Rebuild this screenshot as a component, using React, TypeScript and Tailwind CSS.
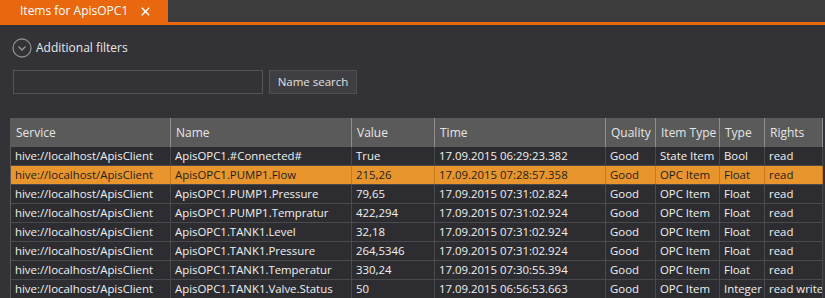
import React from 'react'

const rows = [
  ['hive://localhost/ApisClient', 'ApisOPC1.#Connected#', 'True', '17.09.2015 06:29:23.382', 'Good', 'State Item', 'Bool', 'read'],
  ['hive://localhost/ApisClient', 'ApisOPC1.PUMP1.Flow', '215,26', '17.09.2015 07:28:57.358', 'Good', 'OPC Item', 'Float', 'read'],
  ['hive://localhost/ApisClient', 'ApisOPC1.PUMP1.Pressure', '79,65', '17.09.2015 07:31:02.824', 'Good', 'OPC Item', 'Float', 'read'],
  ['hive://localhost/ApisClient', 'ApisOPC1.PUMP1.Tempratur', '422,294', '17.09.2015 07:31:02.924', 'Good', 'OPC Item', 'Float', 'read'],
  ['hive://localhost/ApisClient', 'ApisOPC1.TANK1.Level', '32,18', '17.09.2015 07:31:02.924', 'Good', 'OPC Item', 'Float', 'read'],
  ['hive://localhost/ApisClient', 'ApisOPC1.TANK1.Pressure', '264,5346', '17.09.2015 07:31:02.924', 'Good', 'OPC Item', 'Float', 'read'],
  ['hive://localhost/ApisClient', 'ApisOPC1.TANK1.Temperatur', '330,24', '17.09.2015 07:30:55.394', 'Good', 'OPC Item', 'Float', 'read'],
  ['hive://localhost/ApisClient', 'ApisOPC1.TANK1.Valve.Status', '50', '17.09.2015 06:56:53.663', 'Good', 'OPC Item', 'Integer', 'read write'],
]

const headers = ['Service', 'Name', 'Value', 'Time', 'Quality', 'Item Type', 'Type', 'Rights']

const cols = 'grid grid-cols-[160px_181px_83px_171px_50px_64px_45px_58px]'

export default function App() {
  return (
    <div className="w-[825px] h-[298px] overflow-hidden bg-[#333337] text-[#f0f0f0] font-['Open_Sans',sans-serif]">
      {/* tab strip */}
      <div className="flex h-[22px] bg-[#3c3c3c]">
        <div className="flex w-[168px] items-center bg-[#e8670f] pl-[20px] pr-[18px] text-[12px] text-white">
          <span>Items for ApisOPC1</span>
          <svg className="ml-auto" width="9" height="9" viewBox="0 0 9 9">
            <path d="M0.8 0.8L8.2 8.2M8.2 0.8L0.8 8.2" stroke="#fff" strokeWidth="1.5" />
          </svg>
        </div>
      </div>
      <div className="h-[3px] bg-[#e8670f]" />

      {/* filters */}
      <div className="mt-[13px] flex items-center gap-[4px] pl-[12px]">
        <svg width="20" height="20" viewBox="0 0 20 20">
          <circle cx="10" cy="10" r="9" fill="none" stroke="#8c8c8c" strokeWidth="1.3" />
          <path d="M6.5 8.5L10 12L13.5 8.5" fill="none" stroke="#9a9a9a" strokeWidth="1.3" />
        </svg>
        <span className="text-[12px] text-[#e8e8e8]">Additional filters</span>
      </div>

      <div className="mt-[12px] flex gap-[6px] pl-[13px]">
        <div className="h-[24px] w-[250px] border border-[#555558] bg-[#333337]" />
        <button className="h-[24px] w-[88px] border border-[#505054] bg-[#3f3f43] text-[11.5px] text-[#e0e0e0]">
          Name search
        </button>
      </div>

      {/* grid */}
      <div className="ml-[10px] mt-[24px] w-[813px] border-l border-[#5a5a5a] text-[11.4px]">
        <div className={`${cols} h-[29px] bg-[#5a5a5a] text-[12px] text-[#e6e6e6]`}>
          {headers.map((h) => (
            <div key={h} className="flex items-center border-r border-[#8e8e8e] pl-[5px] whitespace-nowrap overflow-hidden">
              {h}
            </div>
          ))}
        </div>
        {rows.map((r, i) => (
          <div
            key={i}
            className={`${cols} h-[19px] border-b border-[#4a4a4e] ${i === 1 ? 'bg-[#e8952e] text-[#1e1e1e]' : 'bg-[#2d2d31]'}`}
          >
            {r.map((c, j) => (
              <div
                key={j}
                className={`flex items-center border-r pl-[4px] leading-none whitespace-nowrap overflow-hidden ${i === 1 ? 'border-[#c97b20]' : 'border-[#4a4a4e]'}`}
              >
                {c}
              </div>
            ))}
          </div>
        ))}
      </div>
    </div>
  )
}
